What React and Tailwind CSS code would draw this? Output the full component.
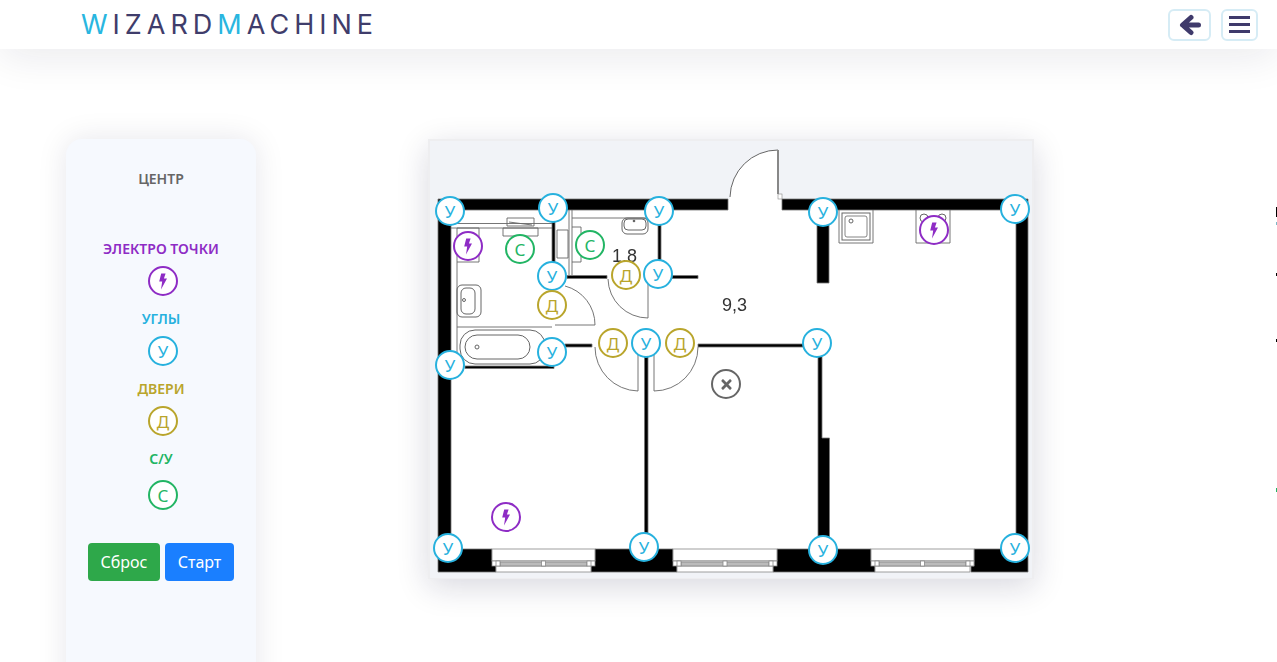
import React from "react";
import { FaTimes } from "react-icons/fa";

const font = { fontFamily: '"Noto Sans", "Open Sans", sans-serif' };

const Bolt = ({ className }) => (
  <svg viewBox="0 0 10 17" className={className} fill="currentColor">
    <path d="M3.2 0.5 L7.6 0.5 L5.9 5.5 L9 5.5 L3 16.5 L4.2 8.5 L1.2 8.5 Z" />
  </svg>
);

const tone = {
  blue: "border-[#27b1de] text-[#27b1de]",
  gold: "border-[#b9a52c] text-[#b9a52c]",
  green: "border-[#22b564] text-[#22b564]",
  purple: "border-[#8e2cc5] text-[#8e2cc5]",
  gray: "border-[#666666] text-[#666666]",
};

const Circle = ({ t, children, className = "" }) => (
  <div
    className={`flex h-[30px] w-[30px] items-center justify-center rounded-full border-2 bg-white text-[17px] font-normal leading-none ${tone[t]} ${className}`}
  >
    {children}
  </div>
);

const markers = [
  ["blue", "У", 450, 211], ["blue", "У", 553, 208], ["blue", "У", 659, 211], ["blue", "У", 552, 276],
  ["blue", "У", 658, 274], ["blue", "У", 552, 352], ["blue", "У", 646, 343], ["blue", "У", 450, 365],
  ["blue", "У", 817, 343], ["blue", "У", 823, 212], ["blue", "У", 1015, 209], ["blue", "У", 448, 548],
  ["blue", "У", 644, 547], ["blue", "У", 823, 550], ["blue", "У", 1015, 548],
  ["gold", "Д", 552, 305], ["gold", "Д", 626, 275], ["gold", "Д", 613, 343], ["gold", "Д", 680, 343],
  ["green", "С", 520, 249], ["green", "С", 590, 245],
  ["purple", "b", 468, 246], ["purple", "b", 934, 230], ["purple", "b", 506, 517],
  ["gray", "x", 726, 384],
];

const walls = [
  "M438 199 H728 V210 H451 V549 H492 V561 H496 V572 H438 Z",
  "M782 199 H1028 V572 H971 V566 H974 V549 H1016 V210 H782 Z",
  "M595 549 H673 V561 H677 V572 H591 V561 H595 Z",
  "M777 549 H871 V561 H875 V572 H773 V561 H777 Z",
  "M817 210 H829 V283 H817 Z",
  "M818 345 H822 V438 H829.5 V549 H818 Z",
  "M644.5 346 H648 V549 H644.5 Z",
  "M698 344 H818 V347 H698 Z",
  "M565 344 H592 V347 H565 Z",
  "M567 275.5 H607 V278.5 H567 Z",
  "M672 275.5 H698 V278.5 H672 Z",
  "M658 210 H661 V275 H658 Z",
  "M552 210 H555 V276 H552 Z",
  "M465 366 H554 V368.5 H465 Z",
];

const lines = [
  "M451 223.5 H552 M451 228 H552",
  "M457 228 V366",
  "M457 327 H552",
  "M569 210 V275 M572 210 V275",
  "M572 227 H581 V262 H572",
  "M557 230 H568 V258 H557 Z",
  "M507 218 H534 V226 H507 Z M509 222 L532 225",
  "M503 228 H538 V236 H503 Z",
  "M457 228 H479 V262 H457",
  "M572 218 H658",
  "M839 210 V243 H873 V210",
  "M916 210 V243 H950 V210",
  "M555 325 H595 A40 40 0 0 0 565 286",
  "M608 279 A40 40 0 0 0 648 318 V278",
  "M595 347 A44 44 0 0 0 638 391 V346",
  "M654 346 V391 A44 44 0 0 0 698 347",
];

const windows = [
  [492, 103],
  [673, 104],
  [871, 103],
];

function Plan() {
  return (
    <svg viewBox="428 139 606 440" className="h-[440px] w-[606px] blur-[0.35px]">
      <rect x="428" y="139" width="606" height="440" fill="#eeeef0" />
      <rect x="430" y="141" width="602" height="437" fill="#f1f3f7" />
      <rect x="438" y="199" width="590" height="373" fill="#ffffff" />
      <path d="M730 199 A48 48 0 0 1 778 150 V200 H730 Z" fill="#ffffff" />
      <path d="M730 197 A48 48 0 0 1 778 150" fill="none" stroke="#666666" strokeWidth="1" />
      <path d="M778 150 V194" stroke="#888888" strokeWidth="2" fill="none" />
      <rect x="778" y="194" width="4" height="5" fill="#ffffff" stroke="#888888" strokeWidth="0.6" />
      {walls.map((d, i) => (
        <path key={i} d={d} fill="#000000" stroke="#777777" strokeWidth="0.8" />
      ))}
      {lines.map((d, i) => (
        <path key={i} d={d} fill="none" stroke="#666666" strokeWidth="0.9" />
      ))}
      <rect x="460" y="330" width="85" height="34" rx="15" fill="none" stroke="#666666" strokeWidth="1" />
      <rect x="465" y="335" width="65" height="24" rx="12" fill="none" stroke="#666666" strokeWidth="1" />
      <circle cx="477" cy="347" r="2" fill="none" stroke="#666666" />
      <rect x="457" y="285" width="24" height="32" rx="5" fill="none" stroke="#666666" strokeWidth="1" />
      <rect x="461" y="288" width="14" height="26" rx="5" fill="none" stroke="#666666" strokeWidth="1" />
      <circle cx="464" cy="300" r="1.5" fill="none" stroke="#666666" />
      <rect x="622" y="218" width="26" height="16" rx="5" fill="none" stroke="#666666" strokeWidth="1" />
      <rect x="624" y="219" width="22" height="11" rx="4" fill="none" stroke="#666666" strokeWidth="1" />
      <circle cx="634" cy="221" r="1.3" fill="#666666" />
      <rect x="842" y="213" width="28" height="27" fill="none" stroke="#666666" strokeWidth="1" />
      <rect x="845" y="216" width="22" height="21" rx="2" fill="none" stroke="#666666" strokeWidth="0.8" />
      <circle cx="851" cy="221" r="2" fill="none" stroke="#666666" />
      <circle cx="924" cy="218" r="4" fill="none" stroke="#666666" />
      <circle cx="942" cy="218" r="4" fill="none" stroke="#666666" />
      {windows.map(([x, w], i) => (
        <g key={i} fill="#ffffff" stroke="#888888" strokeWidth="0.8">
          <rect x={x} y="549" width={w} height="12" />
          <rect x={x} y="561" width={w} height="5" />
          <rect x={x + 4} y="566" width={w - 8} height="6" />
          <rect x={x + 8} y="562" width={w - 16} height="4" fill="#bbbbbb" />
          <rect x={x + w / 2 - 2} y="561" width="4" height="5" />
          <rect x={x + 4} y="561" width="4" height="5" />
          <rect x={x + w - 8} y="561" width="4" height="5" />
        </g>
      ))}
      <text x="612" y="262" fontFamily="Liberation Sans" fontSize="18" fill="#333333">1.8</text>
      <text x="722" y="311" fontFamily="Liberation Sans" fontSize="18" fill="#333333">9,3</text>
    </svg>
  );
}

const Label = ({ className, children }) => (
  <div className={`h-5 text-center text-sm font-semibold leading-5 ${className}`}>{children}</div>
);

export default function App() {
  return (
    <div className="relative h-[662px] w-[1277px] overflow-hidden bg-white" style={font}>
      <header className="relative z-10 flex h-[49px] items-center justify-between bg-white pl-[81px] pr-[19px] shadow-[0_8px_40px_rgba(20,20,60,0.09)]">
        <div
          className="text-[27px] font-normal leading-none tracking-[5px] text-[#3f3d6b]"
          style={{ fontFamily: "Inter, sans-serif" }}
        >
          <span className="text-[#29b6e0]">W</span>IZARD<span className="text-[#29b6e0]">M</span>ACHINE
        </div>
        <div className="flex items-center gap-[10px]">
          <button className="flex h-[32px] w-[43px] items-center justify-center rounded-md border-2 border-[#d6ecf5] text-[#3f3a6b]">
            <svg viewBox="0 0 22 22" className="h-[22px] w-[22px]" fill="none" stroke="currentColor" strokeWidth="5" strokeLinecap="round" strokeLinejoin="round">
              <path d="M12 3.5 L3.5 11 L12 18.5 M4 11 H19.5" />
            </svg>
          </button>
          <button className="flex h-[32px] w-[37px] flex-col items-center justify-center gap-[3.5px] rounded-md border-2 border-[#d6ecf5]">
            <div className="h-[3.5px] w-[21px] bg-[#3f3a6b]" />
            <div className="h-[3.5px] w-[21px] bg-[#3f3a6b]" />
            <div className="h-[3.5px] w-[21px] bg-[#3f3a6b]" />
          </button>
        </div>
      </header>

      <main className="flex pl-[66px] pt-[90px]">
        <aside className="flex h-[620px] w-[190px] shrink-0 flex-col items-center rounded-t-2xl bg-[#f6f9fe] pt-[30px] shadow-[0_0_30px_rgba(20,20,60,0.1)]">
          <Label className="text-[#666666]">ЦЕНТР</Label>
          <Label className="mt-[50px] text-[#8e2cc5]">ЭЛЕКТРО ТОЧКИ</Label>
          <Circle t="purple" className="ml-[4px] mt-[7px]"><Bolt className="h-[17px] w-[10px]" /></Circle>
          <Label className="mt-[13px] text-[#27b1de]">УГЛЫ</Label>
          <Circle t="blue" className="ml-[4px] mt-[7px]">У</Circle>
          <Label className="mt-[13px] text-[#b9a52c]">ДВЕРИ</Label>
          <Circle t="gold" className="ml-[4px] mt-[7px]">Д</Circle>
          <Label className="mt-[13px] text-[#22b564]">С/У</Label>
          <Circle t="green" className="ml-[4px] mt-[11px]">С</Circle>
          <div className="mt-[33px] flex gap-[5px] self-start pl-[22px]">
            <button className="h-[38px] w-[72px] rounded-[4px] bg-[#2ea84a] text-base text-white">Сброс</button>
            <button className="h-[38px] w-[69px] rounded-[4px] bg-[#1a7fff] text-base text-white">Старт</button>
          </div>
        </aside>

        <div className="relative ml-[172px] h-[440px] w-[606px] shrink-0 shadow-[0_8px_30px_rgba(20,20,60,0.16)]">
          <Plan />
          {markers.map(([t, c, x, y], i) => (
            <div key={i} className="absolute" style={{ left: x - 428 - 15, top: y - 139 - 15 }}>
              <Circle t={t}>
                {c === "b" ? (
                  <Bolt className="h-[17px] w-[10px]" />
                ) : c === "x" ? (
                  <FaTimes size={15} />
                ) : (
                  c
                )}
              </Circle>
            </div>
          ))}
        </div>
      </main>

      <div className="absolute left-[1275px] top-[30px] h-[5px] w-[2px] bg-[#27b1de]" />
      <div className="absolute left-[1276px] top-[207px] h-[10px] w-[1px] bg-[#000000]" />
      <div className="absolute left-[1276px] top-[222px] h-[3px] w-[1px] bg-[#7fb8c8]" />
      <div className="absolute left-[1276px] top-[273px] h-[3px] w-[1px] bg-[#000000]" />
      <div className="absolute left-[1276px] top-[339px] h-[3px] w-[1px] bg-[#000000]" />
      <div className="absolute left-[1276px] top-[488px] h-[4px] w-[1px] bg-[#22b564]" />
    </div>
  );
}
